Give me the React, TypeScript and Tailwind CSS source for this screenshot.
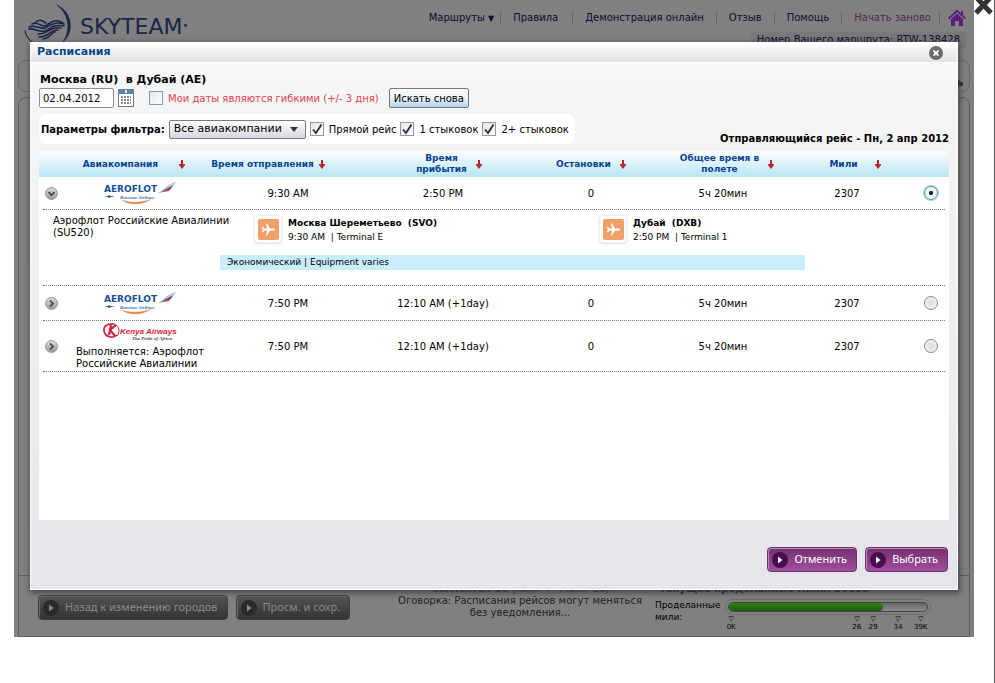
import { useState } from 'react'
import type { ReactNode } from 'react'

type Flight = {
  id: string
  airline: 'aeroflot' | 'kenya'
  operatedBy?: string
  departure: string
  arrival: string
  stops: number
  duration: string
  miles: number
}

const flights: Flight[] = [
  { id: 'su520', airline: 'aeroflot', departure: '9:30 AM', arrival: '2:50 PM', stops: 0, duration: '5ч 20мин', miles: 2307 },
  { id: 'su524', airline: 'aeroflot', departure: '7:50 PM', arrival: '12:10 AM (+1day)', stops: 0, duration: '5ч 20мин', miles: 2307 },
  {
    id: 'kq524',
    airline: 'kenya',
    operatedBy: 'Выполняется: Аэрофлот Российские Авиалинии',
    departure: '7:50 PM',
    arrival: '12:10 AM (+1day)',
    stops: 0,
    duration: '5ч 20мин',
    miles: 2307,
  },
]

const milestones = [
  { label: '0K', left: 3 },
  { label: '26', left: 64 },
  { label: '29', left: 72 },
  { label: '34', left: 84 },
  { label: '39K', left: 95 },
]

function SkyTeamLogo() {
  return (
    <a href="#" aria-label="SkyTeam" className="flex items-end gap-[6px] text-[#1b2547]">
      <svg width="50" height="40" viewBox="0 0 50 40" fill="none" stroke="currentColor" strokeLinecap="round">
        <path d="M33 1 C50 9 50 30 38 39 C46 29 47 12 33 1Z" fill="currentColor" strokeWidth="0.5" />
        <path d="M1 27 C2 32 4 35 8 38" strokeWidth="1.2" />
        <path d="M11 19 C15 14 19 17 22 19" strokeWidth="1.6" />
        <path d="M8 20 C14 17 17 23 21 22 S29 13 39 19" strokeWidth="1.6" />
        <path d="M5 23 C11 20 16 26 21 24 S29 17 40 20" strokeWidth="1.6" />
        <path d="M5 25 C10 24 15 29 21 27 S28 20 40 22" strokeWidth="1.6" />
        <path d="M14 30 C24 31 24 22 37 24" strokeWidth="1.6" />
        <path d="M15 33 C26 33 26 25 34 26" strokeWidth="1.6" />
        <path d="M19 35 C27 34 28 27 31 28" strokeWidth="1.4" />
      </svg>
      <span className="mb-px text-[22px] leading-8">SKYTEAM<sup className="text-[10px]">•</sup></span>
    </a>
  )
}

function AeroflotLogo() {
  return (
    <svg role="img" aria-label="Aeroflot" width="76" height="24" viewBox="0 0 76 24">
      <text x="2" y="11" fontSize="9" fontWeight="700" fill="#1b4f94" fontFamily="DejaVu Sans, sans-serif">AEROFLOT</text>
      <path d="M56 12 C60 11 64 4 74 1 L69 8 C65 9 61 12 56 12Z" fill="#8ea6c4" />
      <path d="M63 8 L69 3 L74 1 L71 5Z" fill="#c5d0de" />
      <path d="M60 11 L71 4 L68 8Z" fill="#274f96" />
      <path d="M61 11 L70 6 L67 10Z" fill="#d33a35" />
      <path d="M2 15 l4 0 l1 -1 l1 1 l5 0 l-4 1 l-2 1 l-1 -1z" fill="#1b4f94" />
      <text x="18" y="18" fontSize="5" fontWeight="700" fontStyle="italic" fill="#2f6cb3" fontFamily="Liberation Serif, serif">Russian Airlines</text>
      <path d="M20 19 C27 22 40 22 49 18 C40 25 26 24 20 19Z" fill="#ee8240" stroke="#ee8240" strokeWidth="0.3" />
    </svg>
  )
}

function KenyaLogo() {
  return (
    <svg role="img" aria-label="Kenya Airways" width="76" height="20" viewBox="0 0 76 20">
      <path d="M12 2 C5 1 1 5 2 9 C3 15 11 17 15 13" fill="none" stroke="#d81e3e" strokeWidth="1.6" />
      <path d="M9 3 L7 13 M14 3 L8 8 L13 14" fill="none" stroke="#d81e3e" strokeWidth="2.2" />
      <path d="M12 2 C18 4 18 11 15 14" fill="none" stroke="#d81e3e" strokeWidth="1" />
      <text x="18" y="12" fontSize="8" fontWeight="700" fontStyle="italic" fill="#d81e3e" fontFamily="Liberation Sans, sans-serif">Kenya Airways</text>
      <text x="30" y="18" fontSize="5" fontWeight="700" fontStyle="italic" fill="#444" fontFamily="Liberation Serif, serif">The Pride of Africa</text>
    </svg>
  )
}

function SortArrow() {
  return (
    <svg width="7" height="9" viewBox="0 0 7 9" className="shrink-0" aria-hidden="true">
      <path d="M3 0h2v4h2v1l-3 4l-3 -4v-1h2z" fill="#b9232b" />
    </svg>
  )
}

function PlaneIcon() {
  return (
    <span className="flex size-7 shrink-0 items-center justify-center rounded-sm border border-[#eee] bg-white shadow-sm">
      <svg width="21" height="21" viewBox="0 0 21 21" aria-hidden="true">
        <rect width="21" height="21" rx="2" fill="#f0a069" />
        <path d="M17 10.500 C17 9.700 16 9.500 15 9.500 H12 L9 4.500 H7.800 L9.300 9.500 H6.500 L5 7.800 H4 L4.800 10.500 L4 13.200 H5 L6.500 11.500 H9.300 L7.800 16.500 H9 L12 11.500 H15 C16 11.500 17 11.300 17 10.500Z" fill="#fff" />
      </svg>
    </span>
  )
}

function PlayIcon({ disc }: { disc: string }) {
  return (
    <svg width="16" height="16" viewBox="0 0 16 16" className="shrink-0" aria-hidden="true">
      <circle cx="8" cy="8" r="8" fill={disc} />
      <path d="M6 4.500 L10.500 8 L6 11.500Z" fill="currentColor" />
    </svg>
  )
}

function Check({ label, checked = false, className = '' }: { label: string; checked?: boolean; className?: string }) {
  return (
    <label className={`flex items-center gap-[5px] ${className}`}>
      <span className="grid size-[14px] shrink-0">
        <input
          type="checkbox"
          defaultChecked={checked}
          className="peer col-start-1 row-start-1 size-[14px] appearance-none border border-[#8a9aa6] bg-linear-to-br from-[#e3e6ea] to-white"
        />
        <svg viewBox="0 0 14 14" aria-hidden="true" className="pointer-events-none invisible col-start-1 row-start-1 peer-checked:visible">
          <path d="M3 7.500 L6 11 L11.500 2.500" fill="none" stroke="#2b3238" strokeWidth="1.900" />
        </svg>
      </span>
      {label}
    </label>
  )
}

function PurpleButton({ children }: { children: ReactNode }) {
  return (
    <button
      type="button"
      className="flex h-[25px] items-center gap-[6px] rounded border border-[#6f2f70] bg-linear-to-b from-[#74306f] to-[#a04f9d] pr-[9px] pl-1 font-['Noto_Sans',sans-serif] text-[11px] text-white shadow-[inset_1px_1px_0_#b98bb8]"
    >
      <PlayIcon disc="#4a0d50" />
      {children}
    </button>
  )
}

function DimButton({ children }: { children: ReactNode }) {
  return (
    <button
      type="button"
      className="flex h-[25px] items-center gap-[6px] rounded border border-[#3c3c3c] bg-linear-to-b from-[#545454] to-[#333] pr-[9px] pl-1 font-['Noto_Sans',sans-serif] text-[11px] whitespace-nowrap text-[#8a8a8a] shadow-[inset_1px_1px_0_#6a6a6a]"
    >
      <PlayIcon disc="#2a2a2a" />
      {children}
    </button>
  )
}

function Segment({ city, time, terminal }: { city: string; time: string; terminal: string }) {
  return (
    <div className="flex items-center gap-[6px]">
      <PlaneIcon />
      <div className="pt-[2px] text-[9px] leading-[14px]">
        <div className="font-bold whitespace-pre">{city}</div>
        <div className="whitespace-pre">{time} | {terminal}</div>
      </div>
    </div>
  )
}

function Divider() {
  return (
    <tr>
      <td colSpan={8} className="px-1">
        <div className="border-t border-dotted border-[#777]" />
      </td>
    </tr>
  )
}

function HeaderCell({ children, className = 'gap-2' }: { children: ReactNode; className?: string }) {
  return (
    <th className="p-0">
      <div className={`flex items-center justify-center text-[9px] leading-[11px] ${className}`}>
        <span>{children}</span>
        <SortArrow />
      </div>
    </th>
  )
}

function FlightRow({ flight, open, selected, onToggle, onSelect }: {
  flight: Flight
  open: boolean
  selected: boolean
  onToggle: () => void
  onSelect: () => void
}) {
  const height = flight.operatedBy ? 'h-[50px]' : open ? 'h-8' : 'h-[34px]'
  return (
    <tr className={`${height} text-center`}>
      <td className="p-0">
        <button
          type="button"
          aria-label="Подробнее"
          onClick={onToggle}
          className="ml-[6px] flex size-[13px] items-center justify-center rounded-full border border-[#999] bg-linear-to-b from-[#ddd] to-[#999]"
        >
          <svg width="7" height="7" viewBox="0 0 7 7" aria-hidden="true">
            <path d={open ? 'M0.500 2 L3.500 5 L6.500 2' : 'M2 0.500 L5 3.500 L2 6.500'} fill="none" stroke="#444" strokeWidth="1.700" />
          </svg>
        </button>
      </td>
      <td className="p-0 pl-1">
        <div className="flex flex-col items-center">
          {flight.airline === 'aeroflot' ? <AeroflotLogo /> : <KenyaLogo />}
          {flight.operatedBy && <p className="w-[134px] pt-1 pl-[3px] text-left leading-3">{flight.operatedBy}</p>}
        </div>
      </td>
      <td className="p-0">{flight.departure}</td>
      <td className="p-0">{flight.arrival}</td>
      <td className="p-0">{flight.stops}</td>
      <td className="p-0">{flight.duration}</td>
      <td className="p-0">{flight.miles}</td>
      <td className="p-0 pl-[3px]">
        <input
          type="radio"
          name="flight"
          aria-label={flight.departure}
          checked={selected}
          onChange={onSelect}
          className="mx-auto block size-[14px] appearance-none rounded-full border border-[#84898e] bg-radial from-[#d8dde2] to-[#fafafa] checked:border-[#5c8ca6] checked:bg-radial checked:from-[#222] checked:from-20% checked:to-[#edf4f8] checked:to-30% checked:shadow-[0_0_0_1px_#a9cfe0]"
        />
      </td>
    </tr>
  )
}

function ScheduleDialog() {
  const [openId, setOpenId] = useState('su520')
  const [selectedId, setSelectedId] = useState('su520')

  return (
    <div
      role="dialog"
      aria-label="Расписания"
      className="absolute inset-x-4 top-[42px] border border-white bg-linear-to-b from-[#f6f7f8] to-[#e4e6ea] shadow-[1px_2px_6px_1px_#444]"
    >
      <div className="flex h-5 items-center justify-between border-b border-white bg-linear-to-b from-white to-[#e0e2e5] pr-[14px] pl-[6px]">
        <h1 className="text-[11px] font-bold text-[#0b4484]">Расписания</h1>
        <button type="button" aria-label="Закрыть" className="flex size-[14px] items-center justify-center rounded-full bg-[#6c6c6c] text-white">
          <svg width="6" height="6" viewBox="0 0 6 6" aria-hidden="true">
            <path d="M0.500 0.500 L5.500 5.500 M5.500 0.500 L0.500 5.500" stroke="currentColor" strokeWidth="1.800" />
          </svg>
        </button>
      </div>

      <div className="px-2 pt-[9px] pb-[17px]">
        <h2 className="pl-px text-[11px] leading-4 font-bold">Москва (RU) &nbsp;в Дубай (AE)</h2>
        <div className="flex h-5 items-center">
          <input
            type="text"
            aria-label="Дата"
            defaultValue="02.04.2012"
            className="h-5 w-[75px] rounded-xs border border-[#8c9196] bg-white px-[3px] text-[10px]"
          />
          <button type="button" aria-label="Календарь" className="ml-1">
            <svg width="16" height="18" viewBox="0 0 16 18" aria-hidden="true">
              <rect x="0.500" y="0.500" width="15" height="17" fill="#fff" stroke="#777" />
              <path d="M0 0h16v5H0z" fill="#5a87a3" />
              <path d="M7 1h2v3h-2z" fill="#dce9f1" />
              <path d="M3 8h10M3 11h10M3 14h10" stroke="#888" strokeWidth="2" strokeDasharray="2 1" />
            </svg>
          </button>
          <Check label="Мои даты являются гибкими (+/- 3 дня)" className="ml-[15px] text-[#e8414a]" />
          <button type="button" className="ml-[10px] h-5 rounded-xs border border-[#6f7a84] bg-linear-to-b from-white via-[#eef3f8] to-[#b4d3ee] px-1">
            Искать снова
          </button>
        </div>

        <div className="mt-[6px] flex h-[37px] items-start justify-between">
          <div className="flex h-[30px] items-center rounded-lg bg-white pr-[6px] pl-[2px]">
            <label htmlFor="airline" className="mr-1 font-bold">Параметры фильтра:</label>
            <div className="grid items-center">
              <select
                id="airline"
                className="col-start-1 row-start-1 h-[19px] appearance-none rounded-xs border border-[#777c82] bg-linear-to-b from-white to-[#d5d8dc] pr-[22px] pl-1 text-[11px]"
              >
                <option>Все авиакомпании</option>
              </select>
              <svg width="8" height="5" viewBox="0 0 8 5" aria-hidden="true" className="pointer-events-none col-start-1 row-start-1 mr-2 justify-self-end">
                <path d="M0 0h8l-4 5z" fill="#333" />
              </svg>
            </div>
            <Check label="Прямой рейс" checked className="ml-1" />
            <Check label="1 стыковок" checked className="ml-1" />
            <Check label="2+ стыковок" checked className="ml-1" />
          </div>
          <p className="self-end pb-[5px] text-[10px] font-bold">Отправляющийся рейс - Пн, 2 апр 2012</p>
        </div>

        <div className="min-h-[369px] bg-white">
          <table className="w-full table-fixed border-collapse">
            <colgroup>
              <col className="w-[26px]" />
              <col className="w-[146px]" />
              <col className="w-[154px]" />
              <col className="w-[156px]" />
              <col className="w-[140px]" />
              <col className="w-[124px]" />
              <col className="w-[124px]" />
              <col className="w-[40px]" />
            </colgroup>
            <thead className="bg-linear-to-b from-[#fbfeff] to-[#b9e6f5] text-[#0a4292]">
              <tr className="h-[26px]">
                <th className="p-0" />
                <HeaderCell className="gap-5 pr-2">Авиакомпания</HeaderCell>
                <HeaderCell className="gap-1 pr-10 whitespace-nowrap">Время отправления</HeaderCell>
                <HeaderCell className="gap-2 pl-3">Время<br />прибытия</HeaderCell>
                <HeaderCell>Остановки</HeaderCell>
                <HeaderCell className="gap-2 pl-2">Общее время в<br />полете</HeaderCell>
                <HeaderCell className="gap-4 pl-4">Мили</HeaderCell>
                <th className="p-0" />
              </tr>
            </thead>
            {flights.map(flight => (
              <tbody key={flight.id}>
                <FlightRow
                  flight={flight}
                  open={openId === flight.id}
                  selected={selectedId === flight.id}
                  onToggle={() => setOpenId(openId === flight.id ? '' : flight.id)}
                  onSelect={() => setSelectedId(flight.id)}
                />
                <Divider />
                {openId === flight.id && (
                  <>
                    <tr>
                      <td colSpan={8} className="h-[75px] p-0 align-top">
                        <div className="flex pt-1">
                          <p className="ml-[14px] w-[201px] pt-px leading-3">Аэрофлот Российские Авиалинии (SU520)</p>
                          <div className="w-[345px]">
                            <Segment city="Москва Шереметьево  (SVO)" time="9:30 AM " terminal="Terminal E" />
                          </div>
                          <Segment city="Дубай  (DXB)" time="2:50 PM " terminal="Terminal 1" />
                        </div>
                        <p className="mt-[11px] mr-36 ml-[181px] bg-[#c9edfc] pl-[7px] text-[9px] leading-[15px]">Экономический | Equipment varies</p>
                      </td>
                    </tr>
                    <Divider />
                  </>
                )}
              </tbody>
            ))}
          </table>
        </div>

        <div className="mt-[27px] flex justify-end gap-2 pr-px">
          <PurpleButton>Отменить</PurpleButton>
          <PurpleButton>Выбрать</PurpleButton>
        </div>
      </div>
    </div>
  )
}

function NavLink({ children, className = '' }: { children: ReactNode; className?: string }) {
  return <a href="#" className={`border-r border-[#666] leading-3 ${className}`}>{children}</a>
}

function MilesMeter() {
  return (
    <div className="flex-1">
      <p className="pl-1 leading-3 font-bold">Текущие проделанные мили: 30035</p>
      <div className="mt-1 flex gap-1">
        <p className="w-[66px] text-[9px] leading-3">Проделанные мили:</p>
        <div className="flex-1">
          <div className="rounded-full border border-[#6c6c6c] p-[2px]">
            <div className="h-[10px] overflow-hidden rounded-full border border-[#444] bg-linear-to-b from-[#666] to-[#8c8c8c]">
              <div className="h-full w-[78%] rounded-full bg-linear-to-b from-[#338018] to-[#1b5c06]" />
            </div>
          </div>
          <div className="relative h-4 text-[7px] leading-2">
            {milestones.map(m => (
              <div key={m.label} className="absolute flex -translate-x-1/2 flex-col items-center" style={{ left: `${m.left}%` }}>
                <span>▽</span>
                <span>{m.label}</span>
              </div>
            ))}
          </div>
        </div>
      </div>
    </div>
  )
}

export default function App() {
  return (
    <div className="flex min-h-screen items-start border-r border-[#555] bg-white font-['DejaVu_Sans',Verdana,sans-serif] text-[10px] text-black">
      <div className="relative ml-[14px] flex-1 bg-[#808080]">
        <header className="flex h-[60px] items-start justify-between pr-2 pl-[10px]">
          <div className="pt-1"><SkyTeamLogo /></div>
          <div className="flex flex-col items-end pt-[9px] text-[#0c0c33]">
            <nav className="flex items-center">
              <NavLink className="pr-[6px]">Маршруты <span className="text-[8px]">▼</span></NavLink>
              <NavLink className="pr-[14px] pl-3">Правила</NavLink>
              <NavLink className="px-3">Демонстрация онлайн</NavLink>
              <NavLink className="px-3">Отзыв</NavLink>
              <NavLink className="px-3">Помощь</NavLink>
              <NavLink className="mr-2 pr-2 pl-3 text-[#55264e]">Начать заново</NavLink>
              <a href="#" aria-label="Домой">
                <svg width="18" height="18" viewBox="0 0 18 18" aria-hidden="true">
                  <path d="M0 9 L9 0.500 L13 4.300 V2 H15 V6.200 L18 9 L16.800 10.200 L9 3 L1.200 10.200Z" fill="#5b1f78" />
                  <path d="M3 10 L9 4.500 L15 10 V17 H11 V12 H7 V17 H3Z" fill="#5b1f78" />
                </svg>
              </a>
            </nav>
            <p className="mt-[5px] bg-[#797979] px-[6px] leading-4">Номер Вашего маршрута: RTW-138428</p>
          </div>
        </header>

        <div className="mx-1 flex h-8 items-end justify-end rounded-lg border border-[#666] pr-[6px] pb-px font-bold">ь</div>

        <main className="mx-1 mt-[5px] rounded-t-lg border border-[#5c5c5c]">
          <div className="min-h-[478px] border-b border-[#5c5c5c]" />
          <div className="flex h-[60px] items-start pr-[38px] pl-[19px]">
            <div className="mt-[19px] flex gap-2">
              <DimButton>Назад к изменению городов</DimButton>
              <DimButton>Просм. и сохр.</DimButton>
            </div>
            <div className="mr-2 ml-auto mt-[7px] w-[254px] text-center leading-3 text-[#222]">
              <p><b>Сегменты: 10</b> (Мин. 4 - Макс. 16)</p>
              <p>Оговорка: Расписания рейсов могут меняться без уведомления...</p>
            </div>
            <div className="mt-[7px] flex w-[276px]">
              <MilesMeter />
            </div>
          </div>
        </main>

        <ScheduleDialog />
      </div>

      <button type="button" aria-label="Закрыть окно" className="w-5">
        <svg width="20" height="15" viewBox="0 0 20 15" aria-hidden="true">
          <path d="M2 -3 L17 13 M17 -3 L2 13" stroke="#333" strokeWidth="5" />
        </svg>
      </button>
    </div>
  )
}
